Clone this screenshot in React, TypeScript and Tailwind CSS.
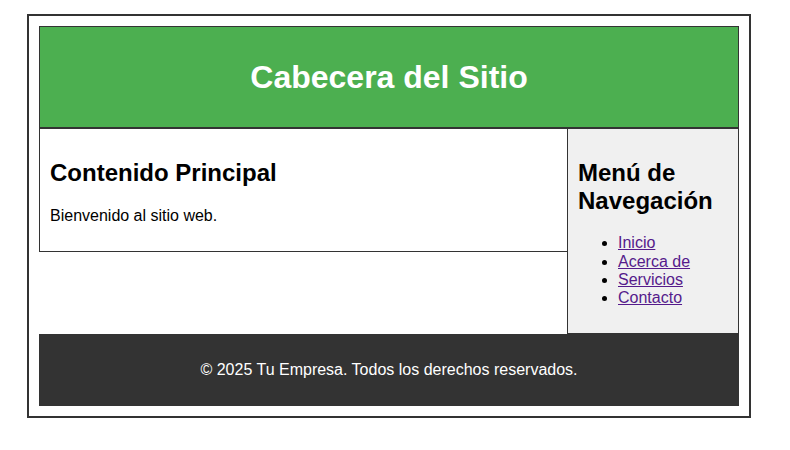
import React from 'react'

const links = ['Inicio', 'Acerca de', 'Servicios', 'Contacto']

const App: React.FC = () => {
  return (
    <div className="min-h-screen bg-white font-['Liberation_Sans',Arial,sans-serif] text-black">
      <div className="ml-[27px] mt-[14px] w-[724px] border-2 border-[#333] p-[10px]">
        {/* Header */}
        <header className="flex h-[102px] items-center justify-center border border-[#333] bg-[#4caf50]">
          <h1 className="text-[32px] font-bold leading-[37px] text-white">Cabecera del Sitio</h1>
        </header>

        {/* Body */}
        <div className="flex items-start">
          <main className="w-[528px] border-y border-l border-[#333] p-[10px]">
            <h2 className="mt-[20px] text-[24px] font-bold leading-[27.6px]">Contenido Principal</h2>
            <p className="mb-[16px] mt-[20px] text-[16px] leading-[18.4px]">Bienvenido al sitio web.</p>
          </main>

          <aside className="w-[172px] border border-[#333] bg-[#f0f0f0] p-[10px]">
            <h2 className="mt-[20px] text-[24px] font-bold leading-[27.6px]">Menú de Navegación</h2>
            <ul className="mb-[15px] mt-[20px] list-disc pl-[40px] text-[16px] leading-[18.4px]">
              {links.map((l) => (
                <li key={l}>
                  <a href="#" className="text-[#551a8b] underline">
                    {l}
                  </a>
                </li>
              ))}
            </ul>
          </aside>
        </div>

        {/* Footer */}
        <footer className="flex h-[72px] items-center justify-center bg-[#333] text-[16px] text-white">
          <p>© 2025 Tu Empresa. Todos los derechos reservados.</p>
        </footer>
      </div>
    </div>
  )
}

export default App
